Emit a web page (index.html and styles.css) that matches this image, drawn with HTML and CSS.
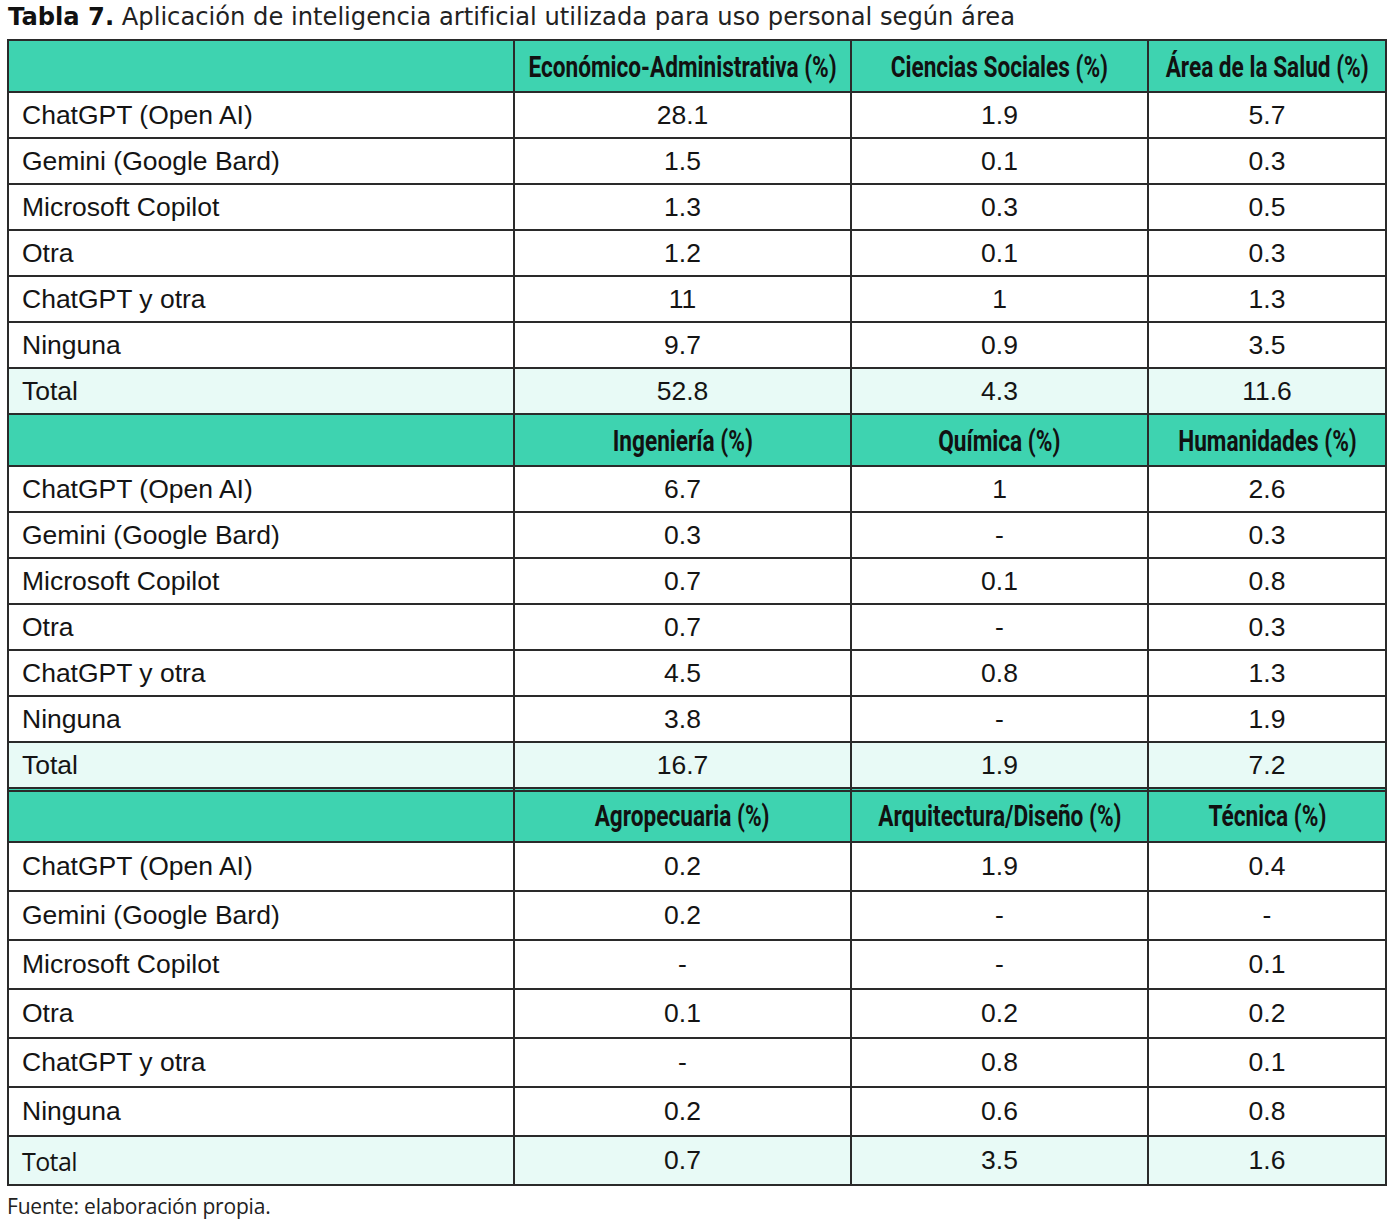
FILE: index.html
```html
<!DOCTYPE html>
<html lang="es">
<head>
<meta charset="utf-8">
<title>Tabla 7</title>
<link rel="stylesheet" href="styles.css">
</head>
<body>
<div class="page">
  <p class="caption"><b>Tabla 7.</b> Aplicación de inteligencia artificial utilizada para uso personal según área</p>
  <table class="data">
    <colgroup><col class="c-label"><col class="c-a"><col class="c-b"><col class="c-c"></colgroup>
    <tbody>
      <tr class="head"><th></th><th><div class="hd"><span>Económico-Administrativa (%)</span></div></th><th><div class="hd"><span>Ciencias Sociales (%)</span></div></th><th><div class="hd"><span>Área de la Salud (%)</span></div></th></tr>
      <tr><td>ChatGPT (Open AI)</td><td>28.1</td><td>1.9</td><td>5.7</td></tr>
      <tr><td>Gemini (Google Bard)</td><td>1.5</td><td>0.1</td><td>0.3</td></tr>
      <tr><td>Microsoft Copilot</td><td>1.3</td><td>0.3</td><td>0.5</td></tr>
      <tr><td>Otra</td><td>1.2</td><td>0.1</td><td>0.3</td></tr>
      <tr><td>ChatGPT y otra</td><td>11</td><td>1</td><td>1.3</td></tr>
      <tr><td>Ninguna</td><td>9.7</td><td>0.9</td><td>3.5</td></tr>
      <tr class="total"><td>Total</td><td>52.8</td><td>4.3</td><td>11.6</td></tr>
    </tbody>
    <tbody>
      <tr class="head"><th></th><th><div class="hd"><span>Ingeniería (%)</span></div></th><th><div class="hd"><span>Química (%)</span></div></th><th><div class="hd"><span>Humanidades (%)</span></div></th></tr>
      <tr><td>ChatGPT (Open AI)</td><td>6.7</td><td>1</td><td>2.6</td></tr>
      <tr><td>Gemini (Google Bard)</td><td>0.3</td><td>-</td><td>0.3</td></tr>
      <tr><td>Microsoft Copilot</td><td>0.7</td><td>0.1</td><td>0.8</td></tr>
      <tr><td>Otra</td><td>0.7</td><td>-</td><td>0.3</td></tr>
      <tr><td>ChatGPT y otra</td><td>4.5</td><td>0.8</td><td>1.3</td></tr>
      <tr><td>Ninguna</td><td>3.8</td><td>-</td><td>1.9</td></tr>
      <tr class="total"><td>Total</td><td>16.7</td><td>1.9</td><td>7.2</td></tr>
    </tbody>
  </table>
  <table class="data third">
    <colgroup><col class="c-label"><col class="c-a"><col class="c-b"><col class="c-c"></colgroup>
    <tbody>
      <tr class="head"><th></th><th><div class="hd"><span>Agropecuaria (%)</span></div></th><th><div class="hd"><span>Arquitectura/Diseño (%)</span></div></th><th><div class="hd"><span>Técnica (%)</span></div></th></tr>
      <tr><td>ChatGPT (Open AI)</td><td>0.2</td><td>1.9</td><td>0.4</td></tr>
      <tr><td>Gemini (Google Bard)</td><td>0.2</td><td>-</td><td>-</td></tr>
      <tr><td>Microsoft Copilot</td><td>-</td><td>-</td><td>0.1</td></tr>
      <tr><td>Otra</td><td>0.1</td><td>0.2</td><td>0.2</td></tr>
      <tr><td>ChatGPT y otra</td><td>-</td><td>0.8</td><td>0.1</td></tr>
      <tr><td>Ninguna</td><td>0.2</td><td>0.6</td><td>0.8</td></tr>
      <tr class="total"><td class="alt">Total</td><td>0.7</td><td>3.5</td><td>1.6</td></tr>
    </tbody>
  </table>
  <p class="source">Fuente: elaboración propia.</p>
</div>
</body>
</html>
```
FILE: styles.css
```css
html, body {
  margin: 0;
  padding: 0;
  background: #ffffff;
}
.page {
  padding: 2px 0 0 7px;
  color: #111111;
}
.caption {
  margin: 0 0 5px 1px;
  height: 32px;
  line-height: 30px;
  font-family: "DejaVu Sans", "Open Sans", sans-serif;
  font-size: 24.2px;
  color: #222222;
  white-space: nowrap;
}
.caption b {
  font-weight: 700;
  color: #111111;
}
.data {
  border-collapse: collapse;
  table-layout: fixed;
  width: 1378px;
  font-family: "Liberation Sans", Arial, sans-serif;
}
.c-label { width: 506px; }
.c-a { width: 337px; }
.c-b { width: 297px; }
.c-c { width: 238px; }
.data th, .data td {
  border: 2px solid #2a2a2a;
  padding: 0;
}
.data td {
  height: 44px;
  font-size: 26.5px;
  text-align: center;
  color: #141414;
}
.data td:first-child {
  text-align: left;
  padding-left: 13px;
}
.head th {
  height: 48px;
  padding-top: 2px;
  background: #3ed3b0;
  font-family: "Roboto", "Liberation Sans", sans-serif;
  font-weight: 700;
  font-size: 29px;
  color: #111111;
}
.hd {
  display: flex;
  justify-content: center;
  white-space: nowrap;
}
.hd span {
  display: inline-block;
  transform: scaleX(0.78);
}
.total td {
  background: #e8faf6;
}
.third {
  margin-top: -2px;
  position: relative;
}
.third td {
  height: 47px;
}
.third .head th {
  height: 50px;
  background: linear-gradient(#3ed3b0 0 1px, #2a2a2a 1px 3px, #3ed3b0 3px);
}
.third td.alt {
  font-family: "Open Sans", "Noto Sans", sans-serif;
  font-size: 25px;
  letter-spacing: -0.6px;
}
.source {
  margin: 6px 0 0 0;
  font-family: "Open Sans", "Noto Sans", sans-serif;
  font-size: 21px;
  letter-spacing: -0.2px;
  color: #222222;
}
```
